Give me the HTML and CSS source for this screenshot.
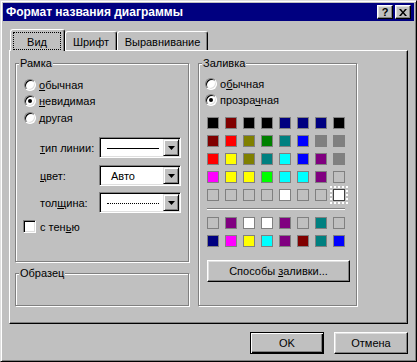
FILE: index.html
```html
<!DOCTYPE html>
<html lang="ru">
<head>
<meta charset="utf-8">
<title>Формат названия диаграммы</title>
<link rel="stylesheet" href="styles.css">
</head>
<body>
<div class="window">
  <div class="titlebar">
    <span class="title">Формат названия диаграммы</span>
    <div class="tbtns">
      <span class="tbtn help">?</span>
      <span class="tbtn close"><svg width="8" height="7" viewBox="0 0 8 7"><path d="M0 0h2l2 2.5L6 0h2L5 3.5 8 7H6L4 4.5 2 7H0l3-3.5z" fill="#000"/></svg></span>
    </div>
  </div>
  <div class="content">
    <div class="tabs">
      <div class="tab active"><span class="focus">Вид</span></div>
      <div class="tab w2">Шрифт</div>
      <div class="tab w3">Выравнивание</div>
    </div>
    <div class="panel">
      <div class="col-left">
        <div class="group frame">
          <span class="legend">Рамка</span>
          <div class="options">
            <div class="opt"><span class="radio"></span><span><u>о</u>бычная</span></div>
            <div class="opt"><span class="radio on"></span><span><u>н</u>евидимая</span></div>
            <div class="opt"><span class="radio"></span><span>другая</span></div>
          </div>
          <div class="fields">
            <div class="field"><span class="flabel"><u>т</u>ип линии:</span><div class="combo"><div class="cval"><span class="solid"></span></div><span class="drop"><svg width="7" height="4" viewBox="0 0 7 4"><path d="M0 0h7L3.5 4z" fill="#000"/></svg></span></div></div>
            <div class="field"><span class="flabel"><u>ц</u>вет:</span><div class="combo"><div class="cval text">Авто</div><span class="drop"><svg width="7" height="4" viewBox="0 0 7 4"><path d="M0 0h7L3.5 4z" fill="#000"/></svg></span></div></div>
            <div class="field thick"><span class="flabel">тол<u>щ</u>ина:</span><div class="combo"><div class="cval"><span class="dotted"></span></div><span class="drop"><svg width="7" height="4" viewBox="0 0 7 4"><path d="M0 0h7L3.5 4z" fill="#000"/></svg></span></div></div>
          </div>
          <div class="check"><span class="box"></span><span>с тен<u>ь</u>ю</span></div>
        </div>
        <div class="group sample">
          <span class="legend">Образец</span>
        </div>
      </div>
      <div class="group fill">
        <span class="legend">Заливка</span>
        <div class="options tight">
          <div class="opt"><span class="radio"></span><span>о<u>б</u>ычная</span></div>
          <div class="opt"><span class="radio on"></span><span>прозра<u>ч</u>ная</span></div>
        </div>
        <div class="palette">
          <span class="sw k"></span><span class="sw m"></span><span class="sw k"></span><span class="sw k"></span><span class="sw n"></span><span class="sw n"></span><span class="sw n"></span><span class="sw k"></span>
          <span class="sw m"></span><span class="sw r"></span><span class="sw o"></span><span class="sw g"></span><span class="sw t"></span><span class="sw b"></span><span class="sw gr"></span><span class="sw gr"></span>
          <span class="sw r"></span><span class="sw y"></span><span class="sw o"></span><span class="sw t"></span><span class="sw c"></span><span class="sw b"></span><span class="sw p"></span><span class="sw gr"></span>
          <span class="sw f"></span><span class="sw y"></span><span class="sw y"></span><span class="sw l"></span><span class="sw c"></span><span class="sw c"></span><span class="sw p"></span><span class="sw s"></span>
          <span class="sw s"></span><span class="sw s"></span><span class="sw s"></span><span class="sw s"></span><span class="sw w"></span><span class="sw s"></span><span class="sw s"></span><span class="sw w sel"></span>
        </div>
        <div class="sep"></div>
        <div class="palette">
          <span class="sw s"></span><span class="sw p"></span><span class="sw w"></span><span class="sw w"></span><span class="sw p"></span><span class="sw s"></span><span class="sw t"></span><span class="sw s"></span>
          <span class="sw n"></span><span class="sw f"></span><span class="sw y"></span><span class="sw c"></span><span class="sw p"></span><span class="sw m"></span><span class="sw t"></span><span class="sw b"></span>
        </div>
        <div class="btn wide"><span>Способы <u>з</u>аливки...</span></div>
      </div>
    </div>
    <div class="actions">
      <div class="btn default">OK</div>
      <div class="btn">Отмена</div>
    </div>
  </div>
</div>
</body>
</html>
```

FILE: styles.css
```css
* { box-sizing: border-box; margin: 0; padding: 0; }
html, body { width: 417px; height: 362px; overflow: hidden; background: #c0c0c0; }
body { font-family: "Liberation Sans", Arial, sans-serif; font-size: 11px; color: #000; }
u { text-decoration: underline; text-underline-offset: 1px; }

.window {
  width: 417px; height: 362px; padding: 2px;
  border: 1px solid; border-color: #dfdfdf #000 #000 #dfdfdf;
  box-shadow: inset 1px 1px 0 #fff, inset -1px -1px 0 #808080;
  background: #c0c0c0;
}
.titlebar {
  height: 18px; background: #000080; color: #fff;
  display: flex; align-items: center; justify-content: space-between;
  padding: 0 3px 0 3px; font-weight: bold; font-size: 12px;
}
.tbtns { display: flex; gap: 2px; }
.tbtn {
  width: 16px; height: 14px; display: flex; align-items: center; justify-content: center;
  background: #c0c0c0; color: #000; font-size: 11px; font-weight: bold;
  border: 1px solid; border-color: #fff #000 #000 #fff;
  box-shadow: inset -1px -1px 0 #808080, inset 1px 1px 0 #dfdfdf;
  line-height: 1;
}
.content { padding: 8px 0 0 6px; }

.tabs { display: flex; align-items: flex-end; height: 22px; margin-bottom: -1px; position: relative; z-index: 1; padding-left: 1px; }
.tab {
  height: 19px; margin-bottom: 1px; padding-top: 1px;
  border: 1px solid; border-bottom: none; border-color: #fff #000 #000 #fff;
  border-radius: 3px 3px 0 0; box-shadow: inset -1px 0 0 #808080;
  background: #c0c0c0; display: flex; align-items: center; justify-content: center;
}
.tab.active { width: 55px; height: 22px; margin-bottom: 0; padding: 2px 3px 1px 2px; align-items: stretch; justify-content: stretch; }
.tab.w2 { width: 52px; }
.tab.w3 { width: 91px; }
.focus { flex: 1; border: 1px dotted #000; display: flex; align-items: center; justify-content: center; padding-top: 1px; }

.panel {
  width: 399px; height: 274px; display: flex; gap: 9px; padding: 12px 0 0 5px;
  border: 1px solid; border-color: #fff #000 #000 #fff;
  box-shadow: inset -1px -1px 0 #808080;
}
.group { border: 1px solid #808080; box-shadow: inset 1px 1px 0 #fff, 1px 1px 0 #fff; }
.legend { display: inline-block; height: 13px; line-height: 13px; margin: -7px 0 0 3px; padding: 0 1px; background: #c0c0c0; vertical-align: top; }
.frame { width: 174px; height: 199px; }
.sample { width: 174px; height: 33px; margin-top: 11px; }
.fill { width: 159px; height: 243px; }

.options { margin-top: 1px; padding-left: 8px; }
.options.tight { margin-top: 0; padding-left: 6px; }
.opt { height: 16px; display: flex; align-items: center; gap: 3px; }
.opt + .opt + .opt { height: 17px; padding-top: 1px; }
.radio {
  width: 12px; height: 12px; border-radius: 50%; background: #fff; flex: none;
  border: 1px solid; border-color: #808080 #fff #fff #808080;
  box-shadow: inset 1px 1px 0 #000, inset -1px -1px 0 #dfdfdf;
  display: flex; align-items: center; justify-content: center;
}
.radio.on::after { content: ""; width: 4px; height: 4px; border-radius: 50%; background: #000; }

.fields { margin-top: 11px; }
.field { display: flex; align-items: center; padding-left: 24px; }
.field + .field { margin-top: 7px; }
.field.thick { margin-top: 6px; }
.flabel { width: 59px; }
.combo {
  width: 82px; height: 21px; display: flex; padding: 1px; background: #fff;
  border: 1px solid; border-color: #808080 #fff #fff #808080;
  box-shadow: inset 1px 1px 0 #000, inset -1px -1px 0 #dfdfdf;
}
.cval { flex: 1; display: flex; align-items: center; justify-content: center; margin: 1px 0 0 1px; }
.cval.text { justify-content: flex-start; padding-left: 9px; }
.solid { width: 52px; height: 1px; background: #000; }
.dotted { width: 52px; border-top: 1px dotted #000; }
.drop {
  width: 16px; height: 17px; flex: none; display: flex; align-items: center; justify-content: center;
  background: #c0c0c0; border: 1px solid; border-color: #dfdfdf #000 #000 #dfdfdf;
  box-shadow: inset 1px 1px 0 #fff, inset -1px -1px 0 #808080;
}
.check { display: flex; align-items: center; gap: 4px; padding-left: 7px; margin-top: 7px; }
.box {
  width: 13px; height: 13px; background: #fff; flex: none;
  border: 1px solid; border-color: #808080 #fff #fff #808080;
  box-shadow: inset 1px 1px 0 #000, inset -1px -1px 0 #dfdfdf;
}

.palette { display: grid; grid-template-columns: repeat(8, 12px); gap: 6px; margin: 9px 0 0 8px; }
.sw { width: 12px; height: 12px; border: 1px solid #808080; }
.sw.sel { border-color: #404040; outline: 2px dotted #fff; outline-offset: 1px; }
.k { background: #000; } .m { background: #800000; } .n { background: #000080; }
.r { background: #f00; } .o { background: #808000; } .g { background: #008000; }
.t { background: #008080; } .b { background: #00f; } .gr { background: #808080; }
.y { background: #ff0; } .c { background: #0ff; } .p { background: #800080; }
.f { background: #f0f; } .l { background: #0f0; } .s { background: #c0c0c0; } .w { background: #fff; }
.sep { width: 138px; height: 2px; margin: 7px 0 0 8px; border-top: 1px solid #808080; border-bottom: 1px solid #fff; }
.sep + .palette { margin-top: 7px; }

.btn {
  height: 22px; display: flex; align-items: center; justify-content: center; background: #c0c0c0;
  border: 1px solid; border-color: #fff #000 #000 #fff;
  box-shadow: inset -1px -1px 0 #808080, inset 1px 1px 0 #dfdfdf;
}
.btn.wide { width: 143px; margin: 13px 0 0 8px; }
.actions { width: 399px; display: flex; justify-content: flex-end; gap: 10px; margin-top: 8px; }
.actions .btn { width: 74px; }
.btn.default { border-color: #000; box-shadow: inset 1px 1px 0 #fff, inset -1px -1px 0 #000, inset -2px -2px 0 #808080; }
```
